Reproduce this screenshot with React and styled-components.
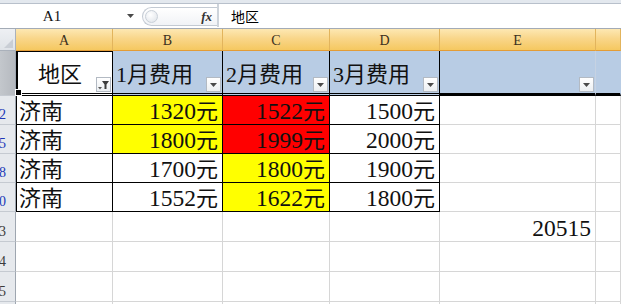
import React from "react";
import styled, { createGlobalStyle, css } from "styled-components";

const GlobalStyle = createGlobalStyle`
  html, body {
    margin: 0;
    padding: 0;
    background: #ffffff;
    overflow: hidden;
  }
  * {
    box-sizing: border-box;
  }
`;

const Window = styled.div`
  width: 621px;
  height: 304px;
  overflow: hidden;
  background: #ffffff;
`;

const TopStrip = styled.div`
  height: 4px;
  background: #e3e8ee;
  border-bottom: 1px solid #b8c0cb;
`;

const FormulaBar = styled.div`
  display: flex;
  height: 25px;
  background: #ffffff;
  border-bottom: 1px solid #a3abb6;
`;

const NameBox = styled.div`
  width: 104px;
  display: flex;
  align-items: center;
  justify-content: center;
  font-family: "Liberation Serif", serif;
  font-size: 15px;
  color: #111;
`;

const NameArrow = styled.div`
  width: 38px;
  display: flex;
  align-items: center;
  justify-content: flex-end;
  padding-right: 8px;
`;

const FxGroup = styled.div`
  width: 75px;
  display: flex;
  align-items: center;
  justify-content: space-between;
  margin: 3px 0 2px;
  padding: 0 5px 0 2px;
  border: 1px solid #c3cad3;
  border-right: none;
  border-radius: 11px 0 0 11px;
  background: linear-gradient(#ffffff, #f1f3f6);
`;

const Knob = styled.div`
  width: 13px;
  height: 13px;
  border-radius: 50%;
  border: 1px solid #c9d0d8;
  background: radial-gradient(circle at 40% 35%, #ffffff, #dde2e8);
`;

const Fx = styled.span`
  font-family: "Liberation Serif", serif;
  font-style: italic;
  font-weight: bold;
  font-size: 13px;
  color: #333;
`;

const Divider = styled.div`
  width: 2px;
  margin: 0 0 1px;
  background: #cdd3da;
`;

const FormulaText = styled.div`
  flex: 1;
  display: flex;
  align-items: center;
  padding-left: 12px;
  font-family: "Noto Sans CJK SC", sans-serif;
  font-size: 14px;
  color: #000;
`;

const Grid = styled.div`
  display: grid;
  grid-template-columns: 16px 97px 110px 107px 110px 156px 1fr;
  grid-template-rows: 22px 45px repeat(4, 29px) repeat(4, 30px);
`;

const Corner = styled.div`
  position: relative;
  background: linear-gradient(#eef0f3, #dfe3e8);
  border-right: 1px solid #aab1bb;
  border-bottom: 1px solid #aab1bb;
  &::after {
    content: "";
    position: absolute;
    right: 2px;
    bottom: 2px;
    width: 9px;
    height: 9px;
    background: #c9ced5;
    clip-path: polygon(100% 0, 100% 100%, 0 100%);
  }
`;

const ColHead = styled.div`
  display: flex;
  align-items: center;
  justify-content: center;
  padding-top: 2px;
  background: linear-gradient(#fde8b3, #f9d68a 45%, #f5c860);
  border-right: 1px solid #e2b45c;
  border-bottom: 1px solid #e39c36;
  font-family: "Liberation Serif", serif;
  font-size: 14px;
  color: #3b3020;
`;

const RowHead = styled.div`
  display: flex;
  align-items: flex-end;
  justify-content: flex-end;
  overflow: hidden;
  padding: 0 9px 2px 0;
  background: ${(p) => (p.$dark ? "linear-gradient(90deg, #c3c7cc, #b5b9bf)" : "#e6e9ed")};
  border-right: 1px solid #9ea6b0;
  border-bottom: 1px solid #c5cad1;
  font-family: "Liberation Serif", serif;
  font-size: 14px;
  line-height: 1;
  white-space: nowrap;
  color: ${(p) => (p.$filtered ? "#2038b8" : "#3c3c3c")};
`;

const HeadCell = styled.div`
  display: flex;
  align-items: flex-end;
  justify-content: space-between;
  padding: 0 1px 0 3px;
  background: ${(p) => (p.$blue ? "#b8cce4" : "#ffffff")};
  border-right: 1px solid ${(p) => (p.$edge === "grid" ? "#c6d2e2" : p.$edge === "none" ? "transparent" : "#000")};
  border-bottom: 3px ${(p) => (p.$solid ? "solid" : "double")} #000;
  font-family: "Liberation Serif", "Noto Sans CJK SC", serif;
  font-size: 22px;
  line-height: 1;
  color: #111;
  ${(p) =>
    p.$selected &&
    css`
      position: relative;
      padding-left: 8px;
      box-shadow: inset 2px 0 0 #000, inset 0 1px 0 #000;
      &::after {
        content: "";
        position: absolute;
        left: -1px;
        bottom: -3px;
        width: 5px;
        height: 5px;
        background: #000;
        border: 1px solid #fff;
      }
    `}
`;

const HeadLabel = styled.span`
  flex: 1;
  padding-bottom: 7px;
  text-align: ${(p) => (p.$center ? "center" : "left")};
  white-space: nowrap;
`;

const DropButton = styled.div`
  flex: none;
  width: 15px;
  height: 15px;
  margin-bottom: 1px;
  display: flex;
  align-items: center;
  justify-content: center;
  border: 1px solid #b3bac3;
  background: linear-gradient(#ffffff, #eceff2);
`;

const Cell = styled.div`
  display: flex;
  align-items: flex-end;
  justify-content: ${(p) => (p.$right ? "flex-end" : "flex-start")};
  padding: 0 4px 1px 3px;
  background: ${(p) => (p.$fill === "y" ? "#ffff00" : p.$fill === "r" ? "#ff0000" : "#ffffff")};
  font-family: "Liberation Serif", "Noto Sans CJK SC", serif;
  font-size: 22px;
  line-height: 1;
  white-space: nowrap;
  color: #111;
  ${(p) =>
    p.$boxed
      ? css`
          border-right: 1px solid #000;
          border-bottom: 1px solid #000;
        `
      : css`
          border-right: 1px solid #d6d6d6;
          border-bottom: 1px solid #d6d6d6;
        `}
  ${(p) =>
    p.$first &&
    css`
      box-shadow: inset 1px 0 0 #000;
    `}
`;

const Num = styled.span`
  font-size: 23.5px;
`;

const Caret = () => (
  <svg width="7" height="4" viewBox="0 0 7 4">
    <path d="M0 0h7L3.5 4z" fill="#4a4a4a" />
  </svg>
);

const FilterIcon = () => (
  <svg width="13" height="13" viewBox="0 0 13 13">
    <path d="M5 3h7L9.5 6.5V11h-2V6.5z" fill="#3d3d3d" />
    <path d="M1 9h4l-2 2.5z" fill="#5a5a5a" />
  </svg>
);

const months = ["1月费用", "2月费用", "3月费用"];

const rows = [
  { n: 2, cells: [[1320, "y"], [1522, "r"], [1500]] },
  { n: 5, cells: [[1800, "y"], [1999, "r"], [2000]] },
  { n: 8, cells: [[1700], [1800, "y"], [1900]] },
  { n: 10, cells: [[1552], [1622, "y"], [1800]] },
];

const extraRows = [
  { n: 13, total: 20515 },
  { n: 14 },
  { n: 15 },
  { n: 16 },
];

export default function App() {
  return (
    <Window>
      <GlobalStyle />
      <TopStrip />
      <FormulaBar>
        <NameBox>A1</NameBox>
        <NameArrow>
          <Caret />
        </NameArrow>
        <FxGroup>
          <Knob />
          <Fx>fx</Fx>
        </FxGroup>
        <Divider />
        <FormulaText>地区</FormulaText>
      </FormulaBar>

      <Grid>
        <Corner />
        {["A", "B", "C", "D", "E", ""].map((c, i) => (
          <ColHead key={i}>{c}</ColHead>
        ))}

        <RowHead $dark />
        <HeadCell $selected>
          <HeadLabel $center>地区</HeadLabel>
          <DropButton>
            <FilterIcon />
          </DropButton>
        </HeadCell>
        {months.map((m) => (
          <HeadCell key={m} $blue>
            <HeadLabel>{m}</HeadLabel>
            <DropButton>
              <Caret />
            </DropButton>
          </HeadCell>
        ))}
        <HeadCell $blue $solid $edge="grid">
          <HeadLabel />
          <DropButton>
            <Caret />
          </DropButton>
        </HeadCell>
        <HeadCell $blue $solid $edge="none" />

        {rows.map((r) => (
          <React.Fragment key={r.n}>
            <RowHead $filtered>{r.n}</RowHead>
            <Cell $boxed $first>
              济南
            </Cell>
            {r.cells.map(([v, fill], i) => (
              <Cell key={i} $boxed $right $fill={fill}>
                <Num>{v}</Num>元
              </Cell>
            ))}
            <Cell />
            <Cell />
          </React.Fragment>
        ))}

        {extraRows.map((r) => (
          <React.Fragment key={r.n}>
            <RowHead>{r.n}</RowHead>
            <Cell />
            <Cell />
            <Cell />
            <Cell />
            <Cell $right>{r.total && <Num>{r.total}</Num>}</Cell>
            <Cell />
          </React.Fragment>
        ))}
      </Grid>
    </Window>
  );
}
